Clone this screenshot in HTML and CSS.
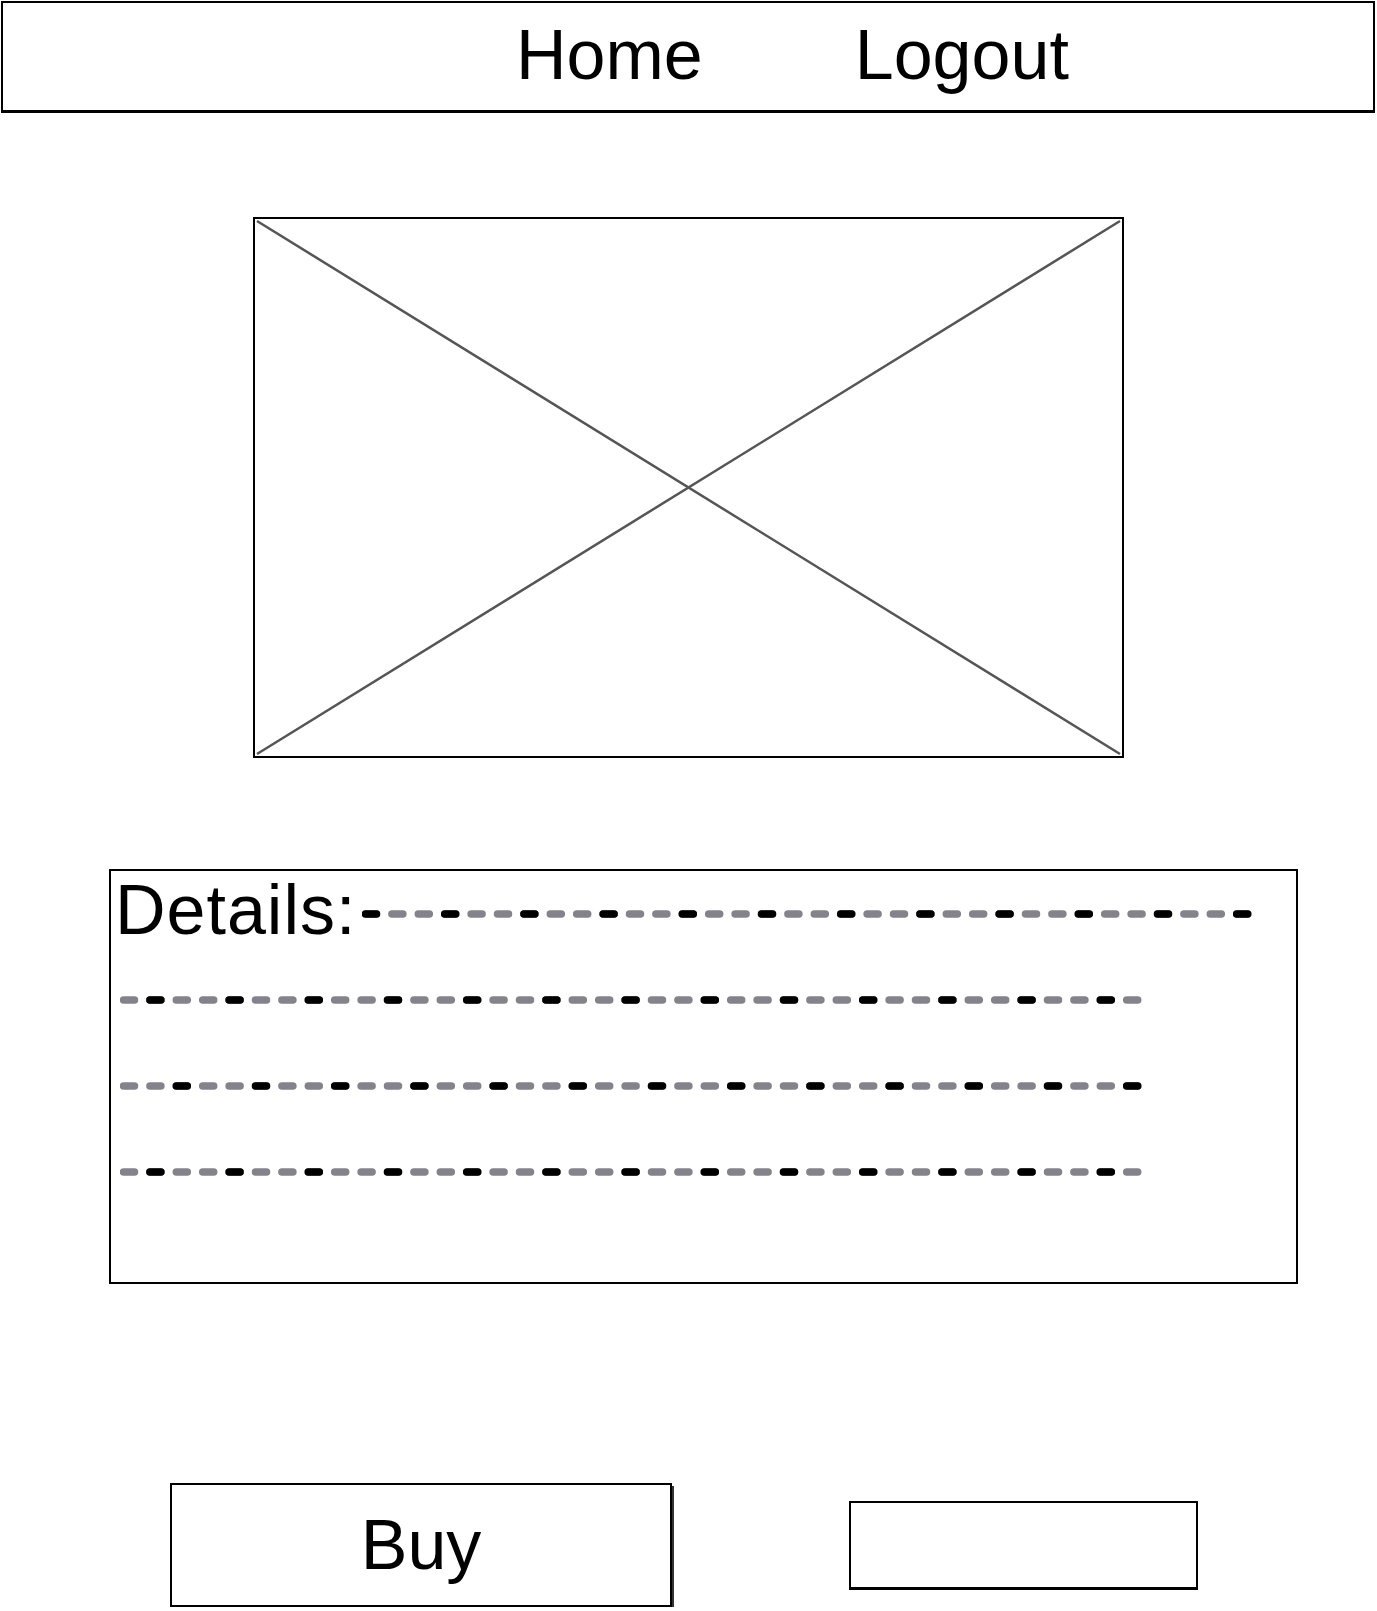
FILE: index.html
```html
<!DOCTYPE html>
<html lang="en">
<head>
<meta charset="UTF-8">
<meta name="viewport" content="width=device-width, initial-scale=1.0">
<title>Product</title>
<link rel="stylesheet" href="styles.css">
</head>
<body>

<div class="nav">
  <a class="nav-link" href="#">Home</a>
  <a class="nav-link" href="#">Logout</a>
</div>

<div class="picture">
  <svg class="picture-cross" viewBox="0 0 867 536" preserveAspectRatio="none">
    <line x1="2" y1="2" x2="865" y2="534" />
    <line x1="865" y1="2" x2="2" y2="534" />
  </svg>
</div>

<div class="details">
  <div class="details-row details-first">
    <span class="details-title">Details:</span>
    <svg class="dashes" width="890" height="8">
      <line class="dash-grey" x1="3.5" y1="4" x2="885.7" y2="4" />
      <line class="dash-dark" x1="3.5" y1="4" x2="885.7" y2="4" />
    </svg>
  </div>
  <div class="details-row">
    <svg class="dashes" width="1022" height="8">
      <line class="dash-grey" x1="3.5" y1="4" x2="1017.7" y2="4" />
      <line class="dash-dark skip-1" x1="3.5" y1="4" x2="1017.7" y2="4" />
    </svg>
  </div>
  <div class="details-row">
    <svg class="dashes" width="1022" height="8">
      <line class="dash-grey" x1="3.5" y1="4" x2="1017.7" y2="4" />
      <line class="dash-dark skip-2" x1="3.5" y1="4" x2="1017.7" y2="4" />
    </svg>
  </div>
  <div class="details-row">
    <svg class="dashes" width="1022" height="8">
      <line class="dash-grey" x1="3.5" y1="4" x2="1017.7" y2="4" />
      <line class="dash-dark skip-1" x1="3.5" y1="4" x2="1017.7" y2="4" />
    </svg>
  </div>
</div>

<div class="actions">
  <button class="btn-buy">Buy</button>
  <div class="btn-empty"></div>
</div>

</body>
</html>
```

FILE: styles.css
```css
body {
  font-family: 'Liberation Sans', Arial, sans-serif;
  background-color: #fff;
  color: #000;
  margin: 0;
}
.nav {
  box-sizing: border-box;
  width: 1374px;
  height: 112px;
  margin: 1px 0 0 1px;
  padding: 17px 0 0 513px;
  border: 2px solid #000;
  border-bottom-width: 3px;
  display: flex;
  gap: 152px;
}
.nav-link {
  font-size: 70px;
  line-height: 70px;
  color: #000;
  text-decoration: none;
}
.picture {
  box-sizing: border-box;
  width: 871px;
  height: 541px;
  margin: 104px 0 0 253px;
  border: 2px solid #000;
}
.picture-cross {
  display: block;
  width: 100%;
  height: 100%;
}
.picture-cross line {
  stroke: #555;
  stroke-width: 2.5;
}
.details {
  box-sizing: border-box;
  width: 1189px;
  height: 415px;
  margin: 111px 0 0 109px;
  padding-left: 9px;
  border: 2px solid #000;
}
.details-row {
  height: 86px;
  display: flex;
  align-items: center;
}
.details-first {
  margin-left: -5px;
  padding-right: 44px;
}
.details-title {
  font-size: 70px;
  line-height: 70px;
  letter-spacing: 1px;
  align-self: flex-start;
  margin-top: 4px;
}
.details-first .dashes {
  margin-left: auto;
}
.dashes {
  display: block;
}
.dashes line {
  stroke-width: 7.5;
  stroke-linecap: round;
}
.dash-grey {
  stroke: #84838b;
  stroke-dasharray: 11 15.4;
}
.dash-dark {
  stroke: #000;
  stroke-dasharray: 11 68.2;
}
.skip-1 {
  stroke-dashoffset: 52.8;
}
.skip-2 {
  stroke-dashoffset: 26.4;
}
.actions {
  display: flex;
  align-items: center;
  gap: 177px;
  margin: 199px 0 0 170px;
}
.btn-buy {
  box-sizing: border-box;
  width: 502px;
  height: 124px;
  border: 2px solid #000;
  box-shadow: 2px 3px 0 #333;
  background-color: #fff;
  font-family: inherit;
  font-size: 70px;
  line-height: 70px;
  color: #000;
  padding: 0;
}
.btn-empty {
  box-sizing: border-box;
  width: 349px;
  height: 89px;
  border: 2px solid #000;
  border-bottom-width: 3px;
}
```
